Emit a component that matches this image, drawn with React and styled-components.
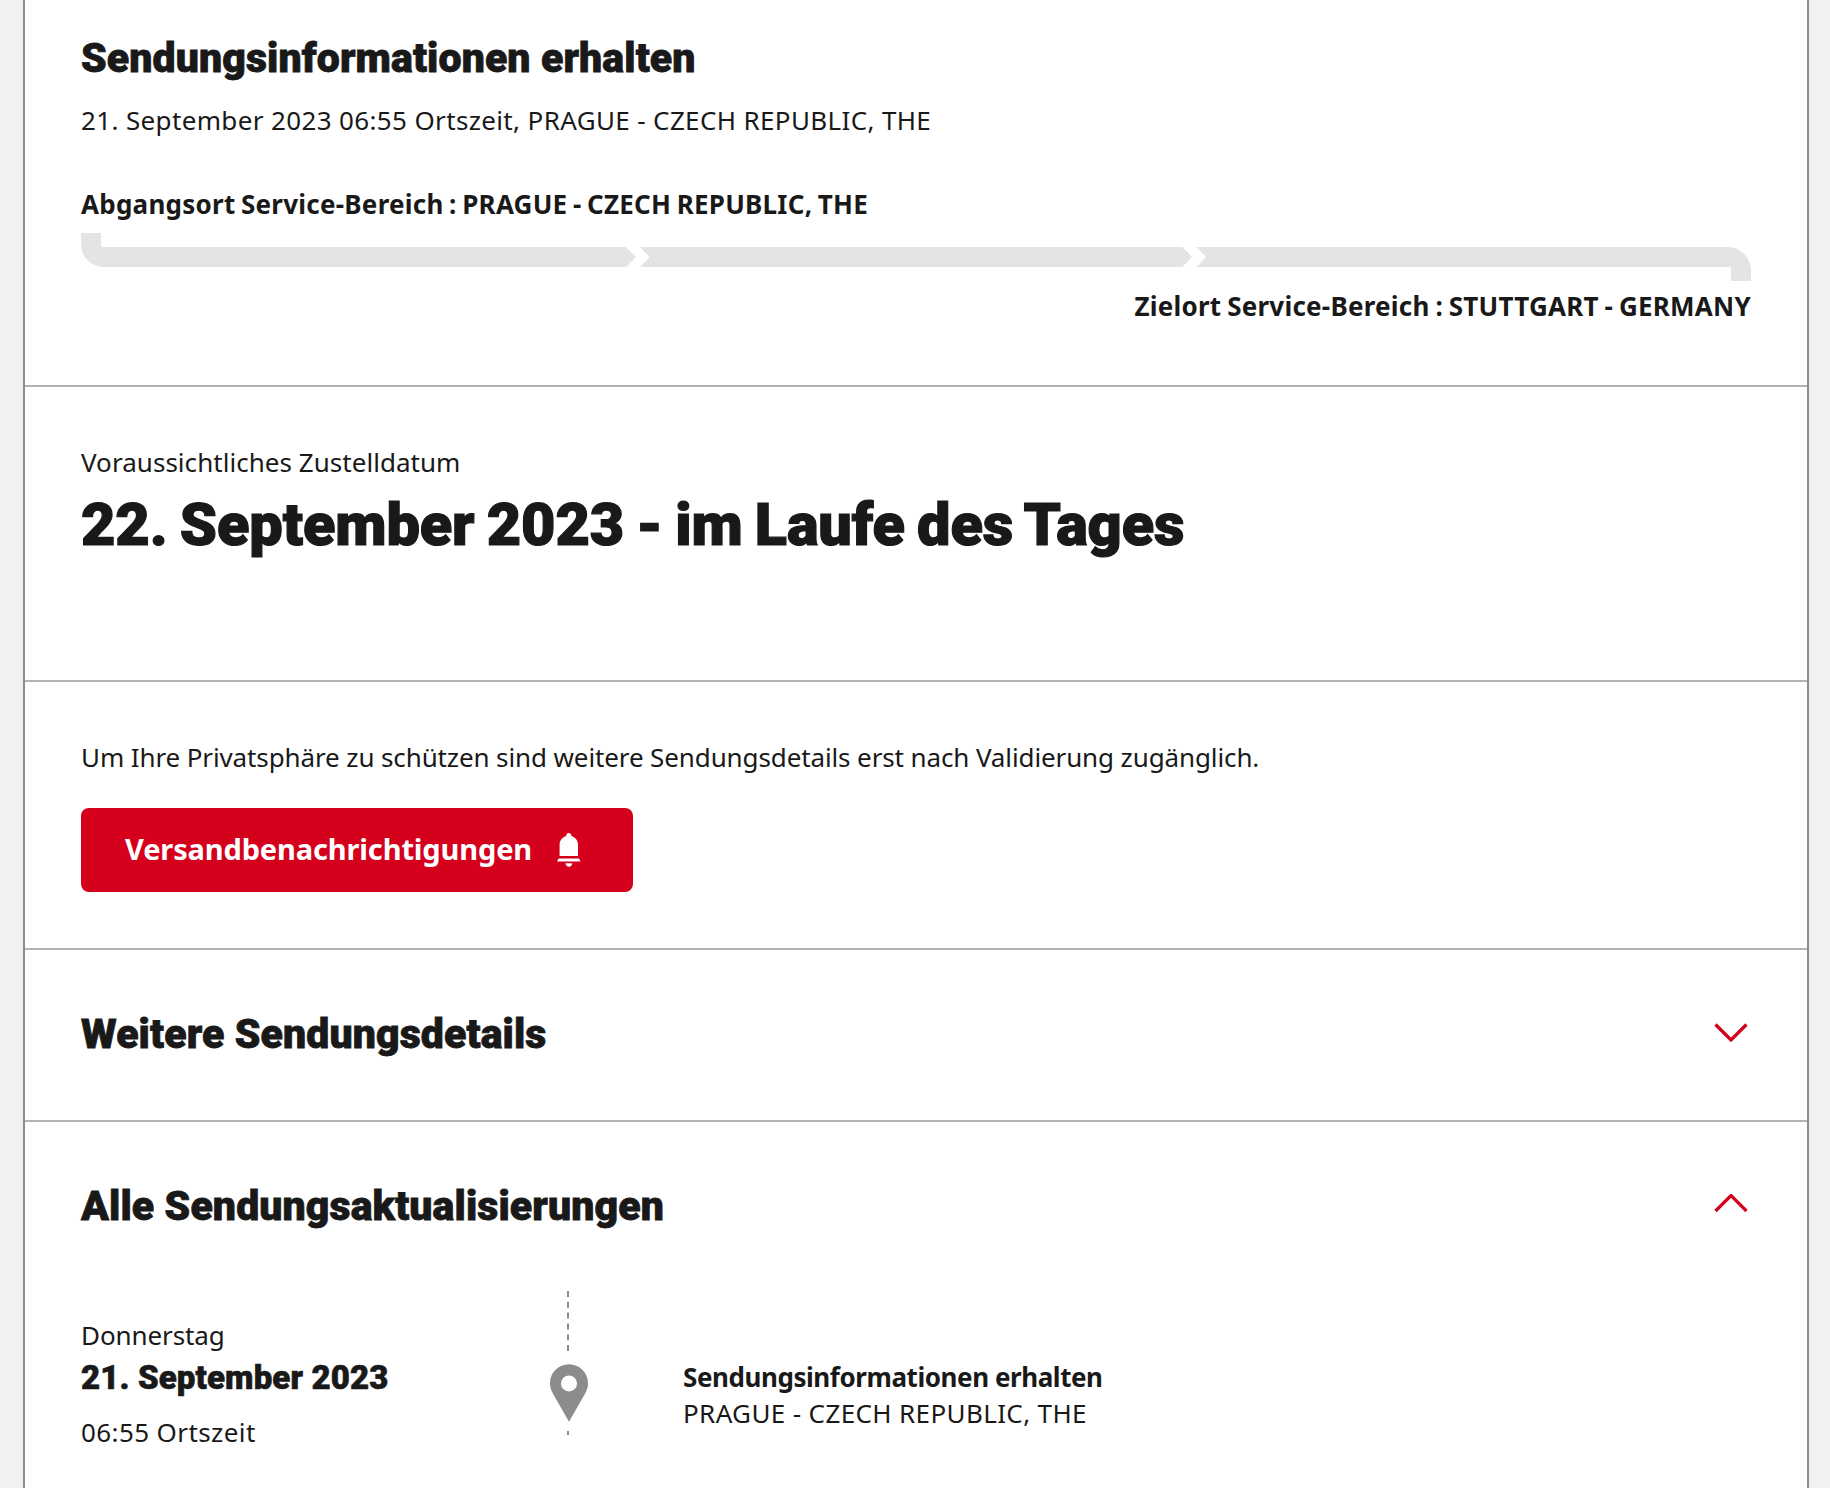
import React from 'react';
import styled, { createGlobalStyle } from 'styled-components';

const App = () => {
  return (
    <Page>
      <GlobalStyle />
      <Card>
        <Section $height={387} $top={34}>
          <Heading>Sendungsinformationen erhalten</Heading>
          <Text $spacing={0.36} $mt={20}>21. September 2023 06:55 Ortszeit, PRAGUE - CZECH REPUBLIC, THE</Text>
          <Text $bold $spacing={0.25} $words={-1.5} $mt={48}>
            Abgangsort Service-Bereich : PRAGUE - CZECH REPUBLIC, THE
          </Text>
          <Progress viewBox="0 0 1670 48" aria-hidden="true">
            <path d="M0 0H20V12Q20 14 22 14H545L555 24L545 34H23A23 22 0 0 1 0 12Z" />
            <path d="M559 14H1101.5L1111 24L1101.5 34H559L568.5 24Z" />
            <path d="M1115.5 14H1647A23 24 0 0 1 1670 38V48H1650V36Q1650 34 1648 34H1115.5L1125 24Z" />
          </Progress>
          <Text $bold $right $spacing={0.24} $words={-1.2} $mt={7}>
            Zielort Service-Bereich : STUTTGART - GERMANY
          </Text>
        </Section>

        <Section $height={295} $top={57}>
          <Text $spacing={0.04}>Voraussichtliches Zustelldatum</Text>
          <DeliveryDate>22. September 2023 - im Laufe des Tages</DeliveryDate>
        </Section>

        <Section $height={268} $top={57}>
          <Text $spacing={-0.115}>
            Um Ihre Privatsphäre zu schützen sind weitere Sendungsdetails erst nach Validierung zugänglich.
          </Text>
          <NotifyButton>
            <span>Versandbenachrichtigungen</span>
            <BellIcon />
          </NotifyButton>
        </Section>

        <Section $height={172}>
          <AccordionHeader>
            <Heading>Weitere Sendungsdetails</Heading>
            <Chevron viewBox="0 0 34 19" aria-hidden="true">
              <path d="M1.5 1.5L17 17L32.5 1.5" />
            </Chevron>
          </AccordionHeader>
        </Section>

        <Section $last>
          <AccordionHeader>
            <Heading>Alle Sendungsaktualisierungen</Heading>
            <Chevron $open viewBox="0 0 34 19" aria-hidden="true">
              <path d="M1.5 17L17 1.5L32.5 17" />
            </Chevron>
          </AccordionHeader>
          <Timeline>
            <DateColumn>
              <Text $spacing={-0.1}>Donnerstag</Text>
              <EventDate>21. September 2023</EventDate>
              <Text $spacing={0.4} $mt={16}>06:55 Ortszeit</Text>
            </DateColumn>
            <TimelineMarker />
            <EventColumn>
              <Text as="h3" $bold $spacing={-0.43}>Sendungsinformationen erhalten</Text>
              <Text $spacing={0.37}>PRAGUE - CZECH REPUBLIC, THE</Text>
            </EventColumn>
          </Timeline>
        </Section>
      </Card>
    </Page>
  );
};

const BellIcon = () => (
  <Bell viewBox="0 0 24 34" aria-hidden="true">
    <path d="M11.8 0C13.4 0 14.2 1 14.4 3C18.4 4.4 21 7.6 21 12V23H2.6V12C2.6 7.6 5.2 4.4 9.2 3C9.4 1 10.2 0 11.8 0Z" />
    <path d="M1.5 25.5H22L23.5 28.5H0Z" />
    <path d="M8.5 30.2H15.3C15 32.4 13.8 33.8 11.9 33.8C10 33.8 8.8 32.4 8.5 30.2Z" />
  </Bell>
);

const TimelineMarker = () => (
  <Marker viewBox="0 0 38 145" aria-hidden="true">
    <path d="M18 0V60" stroke="#8c8c8c" strokeWidth="2" strokeDasharray="6 4.8" />
    <path
      fillRule="evenodd"
      fill="#8c8c8c"
      d="M19 73.3C8.5 73.3 0 81.6 0 92.3C0 96.4 1.2 99.6 3 102.8L19 130.7L35 102.8C36.8 99.6 38 96.4 38 92.3C38 81.6 29.5 73.3 19 73.3ZM19 84.4A8 8 0 1 1 19 100.4A8 8 0 1 1 19 84.4Z"
    />
    <path d="M18 140V144" stroke="#8c8c8c" strokeWidth="2" />
  </Marker>
);

const GlobalStyle = createGlobalStyle`
  * {
    box-sizing: border-box;
    margin: 0;
    padding: 0;
  }

  body {
    background-color: #f1f1f1;
    color: #191919;
    font-family: 'Noto Sans', sans-serif;
  }
`;

const Page = styled.div`
  width: 100%;
  height: 1488px;
  padding: 0 21px 0 23px;
  overflow: hidden;
`;

const Card = styled.main`
  height: 100%;
  background-color: #fff;
  border-left: 2px solid #8c8c8c;
  border-right: 2px solid #8c8c8c;
`;

const Section = styled.section`
  height: ${({ $height }) => ($height ? `${$height}px` : 'auto')};
  padding: ${({ $top }) => $top || 0}px 56px 0;
  border-bottom: ${({ $last }) => ($last ? 'none' : '2px solid #b2b2b2')};
`;

const Heading = styled.h2`
  font-family: 'Roboto', sans-serif;
  font-size: 41px;
  font-weight: 900;
  line-height: 48px;
  letter-spacing: 0.12px;
  -webkit-text-stroke: 0.8px currentColor;
  white-space: nowrap;
`;

const Text = styled.p`
  margin-top: ${({ $mt }) => $mt || 0}px;
  font-size: 26px;
  font-weight: ${({ $bold }) => ($bold ? 700 : 400)};
  line-height: 36px;
  letter-spacing: ${({ $spacing }) => $spacing || 0}px;
  word-spacing: ${({ $words }) => $words || 0}px;
  text-align: ${({ $right }) => ($right ? 'right' : 'left')};
  white-space: nowrap;
`;

const Progress = styled.svg`
  display: block;
  width: 1670px;
  height: 48px;
  margin-top: 11px;
  fill: #e4e4e4;
`;

const DeliveryDate = styled.p`
  margin-top: 13px;
  font-family: 'Roboto', sans-serif;
  font-size: 59.5px;
  font-weight: 900;
  line-height: 64px;
  letter-spacing: -0.12px;
  word-spacing: -2.5px;
  -webkit-text-stroke: 1.2px currentColor;
  white-space: nowrap;
`;

const NotifyButton = styled.button`
  display: flex;
  align-items: center;
  width: 552px;
  height: 84px;
  margin-top: 33px;
  padding: 0 44px 3px;
  border: none;
  border-radius: 8px;
  background-color: #d5001c;
  color: #fff;
  font-family: inherit;
  font-size: 29px;
  font-weight: 700;
  letter-spacing: -0.14px;
  cursor: pointer;

  span {
    width: 432px;
    text-align: left;
  }
`;

const Bell = styled.svg`
  width: 24px;
  height: 34px;
  margin-top: 2px;
  fill: #fff;
`;

const AccordionHeader = styled.div`
  display: flex;
  align-items: center;
  justify-content: space-between;
  height: 170px;
  padding-right: 3px;
  padding-bottom: 5px;

  h2 {
    padding-top: 3px;
  }
`;

const Chevron = styled.svg`
  width: 34px;
  height: 19px;
  margin-bottom: ${({ $open }) => ($open ? 2 : 0)}px;
  fill: none;
  stroke: #d5001c;
  stroke-width: 3.2;
`;

const Timeline = styled.div`
  display: grid;
  grid-template-columns: 469px 38px auto;
  align-items: start;
`;

const DateColumn = styled.div`
  padding-top: 25px;
`;

const EventDate = styled.p`
  margin-top: 5px;
  font-family: 'Roboto', sans-serif;
  font-size: 33px;
  font-weight: 900;
  line-height: 40px;
  letter-spacing: 0.12px;
  -webkit-text-stroke: 0.6px currentColor;
  white-space: nowrap;
`;

const Marker = styled.svg`
  width: 38px;
  height: 145px;
  margin-top: -1px;
`;

const EventColumn = styled.div`
  padding: 67px 0 0 95px;
`;

export default App;
